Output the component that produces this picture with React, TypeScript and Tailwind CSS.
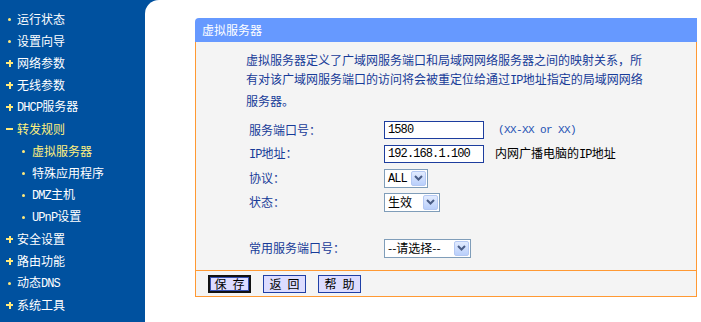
import type { ReactNode } from "react";

type MenuKind = "dot" | "plus" | "minus" | "sub";

const menu: { label: string; kind: MenuKind; active?: boolean }[] = [
  { label: "运行状态", kind: "dot" },
  { label: "设置向导", kind: "dot" },
  { label: "网络参数", kind: "plus" },
  { label: "无线参数", kind: "plus" },
  { label: "DHCP服务器", kind: "plus" },
  { label: "转发规则", kind: "minus", active: true },
  { label: "虚拟服务器", kind: "sub", active: true },
  { label: "特殊应用程序", kind: "sub" },
  { label: "DMZ主机", kind: "sub" },
  { label: "UPnP设置", kind: "sub" },
  { label: "安全设置", kind: "plus" },
  { label: "路由功能", kind: "plus" },
  { label: "动态DNS", kind: "dot" },
  { label: "系统工具", kind: "plus" },
];

// latin runs get a narrow mono face, like the old bitmap font
const Mixed = ({ text }: { text: string }) => {
  const parts = text.split(/([A-Za-z0-9.\-()]+(?: [A-Za-z0-9.\-()]+)*)/);
  return (
    <>
      {parts.map((part, i) =>
        /[A-Za-z0-9]/.test(part) ? (
          <span
            key={i}
            className="font-['Liberation_Mono',monospace] tracking-[-0.9px]"
          >
            {part}
          </span>
        ) : (
          <span key={i}>{part}</span>
        ),
      )}
    </>
  );
};

const Bullet = ({ kind }: { kind: MenuKind }) => {
  if (kind === "plus")
    return (
      <span className="relative h-[7px] w-[7px] shrink-0">
        <span className="absolute left-0 top-[2.5px] h-[2px] w-[7px] bg-[#ffe97a]" />
        <span className="absolute left-[2.5px] top-0 h-[7px] w-[2px] bg-[#ffe97a]" />
      </span>
    );
  if (kind === "minus")
    return <span className="h-[2px] w-[7px] shrink-0 bg-[#ffe97a]" />;
  return (
    <span className="mx-[2px] h-[3px] w-[3px] shrink-0 rounded-full bg-[#ffe97a]" />
  );
};

const Chevron = () => (
  <span className="flex h-[15px] w-[15px] items-center justify-center rounded-[2px] border border-[#b4c8f3] bg-[linear-gradient(180deg,#e2ebfe,#b9cffb)]">
    <svg width="9" height="6" viewBox="0 0 9 6">
      <path d="M1 1 L4.5 4.5 L8 1" fill="none" stroke="#4a5d86" strokeWidth="2" />
    </svg>
  </span>
);

const Select = ({ value, width }: { value: ReactNode; width: string }) => (
  <div
    className={`flex h-[19px] items-center justify-between border border-[#7f9db9] bg-white pl-[3px] pr-[1px] text-black ${width}`}
  >
    <span className="leading-none">{value}</span>
    <Chevron />
  </div>
);

const TextInput = ({ value }: { value: string }) => (
  <div className="flex h-[18px] w-[100px] items-center border border-[#1d3d9e] bg-white pl-[3px] font-['Liberation_Mono',monospace] text-black tracking-[-0.9px]">
    {value}
  </div>
);

const FormRow = ({ label, children }: { label: ReactNode; children: ReactNode }) => (
  <div className="flex h-[24px] items-center">
    <div className="w-[135px] shrink-0">{label}</div>
    <div className="flex items-center">{children}</div>
  </div>
);

const FooterButton = ({ text, focused }: { text: string; focused?: boolean }) => (
  <button
    className={`h-[18px] w-[43px] bg-[#dcdcff] text-[12px] leading-none text-black ${
      focused
        ? "border-2 border-[#111] shadow-[inset_0_0_0_1px_#3450b4]"
        : "border border-[#1f3fa6]"
    }`}
  >
    {text}
  </button>
);

export default function App() {
  return (
    <div className="flex h-[322px] w-[701px] overflow-hidden bg-[#00519f] font-['Noto_Sans_CJK_SC',sans-serif] text-[12px]">
      <nav className="w-[145px] shrink-0 pt-[8px] text-white">
        {menu.map((item) => (
          <div
            key={item.label}
            className={`flex h-[22px] items-center ${
              item.kind === "sub" ? "gap-[5px] pl-[20px]" : "gap-[4px] pl-[6px]"
            } ${item.active ? "text-[#fff07e]" : ""}`}
          >
            <Bullet kind={item.kind} />
            <span className="leading-none">
              <Mixed text={item.label} />
            </span>
          </div>
        ))}
      </nav>

      <main className="flex-1 rounded-tl-[14px] bg-white pl-[50px] pr-[4px] pt-[18px]">
        <div className="flex h-[24px] items-center rounded-tl-[4px] bg-[#6699ff] pl-[7px] text-white">
          虚拟服务器
        </div>

        <section className="h-[228px] border-x border-[#ff9933] bg-[#f4f4f4] pt-[8px] text-[#173b98]">
          <p className="pl-[50px] leading-[19px]">
            虚拟服务器定义了广域网服务端口和局域网网络服务器之间的映射关系，所
            <br />
            有对该广域网服务端口的访问将会被重定位给通过<Mixed text="IP" />地址指定的局域网网络
            <br />
            服务器。
          </p>

          <div className="mt-[8px] pl-[53px]">
            <FormRow label="服务端口号：">
              <TextInput value="1580" />
              <span className="ml-[14px] font-['Liberation_Mono',monospace] text-[11px] tracking-[-0.6px] text-[#2351b3]">
                (XX-XX or XX)
              </span>
            </FormRow>
            <FormRow label={<Mixed text="IP地址：" />}>
              <TextInput value="192.168.1.100" />
              <span className="ml-[11px] text-black">
                <Mixed text="内网广播电脑的IP地址" />
              </span>
            </FormRow>
            <FormRow label="协议：">
              <Select width="w-[44px]" value={<Mixed text="ALL" />} />
            </FormRow>
            <FormRow label="状态：">
              <Select width="w-[56px]" value="生效" />
            </FormRow>
            <div className="h-[22px]" />
            <FormRow label="常用服务端口号：">
              <Select width="w-[87px]" value="--请选择--" />
            </FormRow>
          </div>
        </section>

        <footer className="flex h-[27px] items-center gap-[12px] border border-[#ff9933] bg-[#f4f4f4] pl-[12px]">
          <FooterButton text={"保\u2002存"} focused />
          <FooterButton text={"返\u2002回"} />
          <FooterButton text={"帮\u2002助"} />
        </footer>
      </main>
    </div>
  );
}
